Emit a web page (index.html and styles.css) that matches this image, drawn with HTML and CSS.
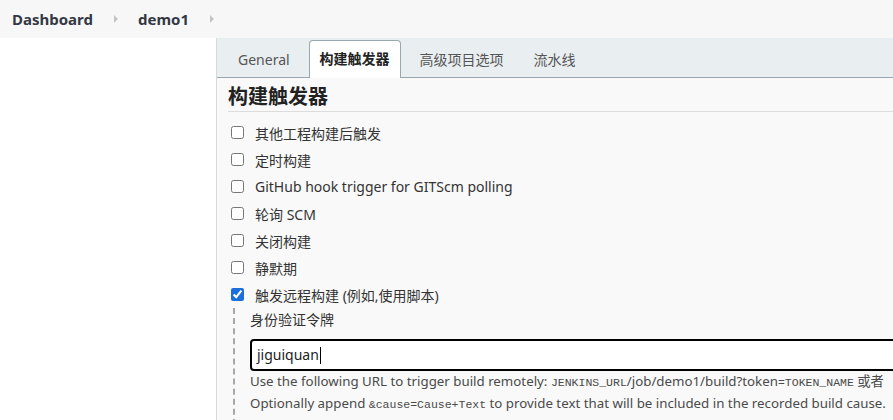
FILE: index.html
```html
<!DOCTYPE html>
<html lang="zh-CN">
<head>
    <meta charset="UTF-8">
    <meta name="viewport" content="width=device-width, initial-scale=1.0">
    <title>demo1 Config [Jenkins]</title>
    <link rel="stylesheet" href="styles.css">
</head>
<body>
    <div class="breadcrumbs">
        <a class="crumb" href="#">Dashboard</a>
        <span class="sep"></span>
        <a class="crumb" href="#">demo1</a>
        <span class="sep"></span>
    </div>

    <div class="page">
        <div class="side-panel"></div>

        <div class="main-panel">
            <div class="tabbar">
                <div class="tab">General</div>
                <div class="tab active">构建触发器</div>
                <div class="tab">高级项目选项</div>
                <div class="tab">流水线</div>
            </div>

            <div class="section">
                <h2 class="section-title">构建触发器</h2>

                <label class="check-row"><input type="checkbox"> 其他工程构建后触发</label>
                <label class="check-row"><input type="checkbox"> 定时构建</label>
                <label class="check-row"><input type="checkbox"> GitHub hook trigger for GITScm polling</label>
                <label class="check-row"><input type="checkbox"> 轮询 SCM</label>
                <label class="check-row"><input type="checkbox"> 关闭构建</label>
                <label class="check-row"><input type="checkbox"> 静默期</label>
                <label class="check-row"><input type="checkbox" checked> 触发远程构建 (例如,使用脚本)</label>

                <div class="nested">
                    <div class="field-label">身份验证令牌</div>
                    <div class="text-input">jiguiquan<span class="caret"></span></div>
                    <div class="help">
                        <p>Use the following URL to trigger build remotely: <code>JENKINS_URL</code>/job/demo1/build?token<code>=TOKEN_NAME</code> 或者</p>
                        <p>Optionally append <code>&amp;cause=Cause+Text</code> to provide text that will be included in the recorded build cause.</p>
                    </div>
                </div>
            </div>
        </div>
    </div>
</body>
</html>
```

FILE: styles.css
```css
html, body {
    margin: 0;
    height: 100%;
    overflow: hidden;
}
body {
    font-family: "Noto Sans", "Noto Sans CJK SC", sans-serif;
    font-size: 14px;
    color: #333;
    background-color: #fff;
}
.breadcrumbs {
    display: flex;
    align-items: center;
    height: 38px;
    padding-left: 12px;
    background-color: #f7f7f7;
}
.crumb {
    font-size: 15px;
    font-weight: bold;
    color: #333844;
    text-decoration: none;
}
.sep {
    width: 0;
    height: 0;
    margin: 0 20px 0 21px;
    border-top: 4px solid transparent;
    border-bottom: 4px solid transparent;
    border-left: 4px solid #c4c4c4;
}
.page {
    display: flex;
    height: calc(100% - 38px);
}
.side-panel {
    flex: 0 0 216px;
}
.main-panel {
    flex: 1;
    min-width: 0;
    overflow: hidden;
    border-left: 1px solid #d9d9d9;
    background-color: #f9f9f9;
}
.tabbar {
    display: flex;
    align-items: flex-end;
    gap: 8px;
    height: 39px;
    padding-left: 10px;
    background-color: #e9eef1;
    border-bottom: 1px solid #9ba7af;
}
.tab {
    height: 36px;
    line-height: 36px;
    padding: 0 10px;
    color: #555;
    border: 1px solid transparent;
    border-bottom: none;
    border-radius: 4px 4px 0 0;
    margin-bottom: -1px;
}
.tab.active {
    height: 37px;
    font-weight: bold;
    color: #222;
    background-color: #fff;
    border-color: #9ba7af;
}
.section {
    padding: 0 0 0 11px;
}
.section-title {
    margin: 7px 0 7px 0;
    padding-bottom: 2px;
    font-size: 20px;
    line-height: 24px;
    color: #222;
    border-bottom: 1px solid #dcdcdc;
}
.check-row {
    display: flex;
    align-items: center;
    height: 27px;
    padding-left: 3px;
}
.check-row input {
    width: 13px;
    height: 13px;
    margin: 0 11px 0 0;
    accent-color: #1a6fdc;
}
.nested {
    margin: 0 0 0 5px;
    padding: 1px 0 20px 15px;
    border-left: 2px dashed #a8a8a8;
}
.field-label {
    line-height: 22px;
}
.text-input {
    box-sizing: border-box;
    width: 900px;
    height: 32px;
    margin-top: 8px;
    padding: 0 5px;
    line-height: 28px;
    font-size: 14px;
    color: #222;
    border: 2px solid #000;
    border-radius: 4px;
    background-color: #fff;
}
.caret {
    display: inline-block;
    width: 1px;
    height: 17px;
    margin-left: 1px;
    vertical-align: -4px;
    background-color: #000;
}
.help {
    color: #4a4a4a;
    font-size: 13.3px;
}
.help p {
    margin: 0;
    line-height: 21px;
    white-space: nowrap;
}
.help code {
    font-family: "Liberation Mono", monospace;
    font-size: 11.5px;
}
```
